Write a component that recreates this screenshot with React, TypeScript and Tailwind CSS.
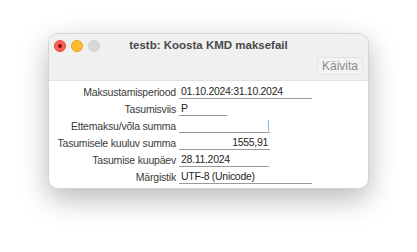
import React from 'react';

type Row = { label: string; value: string; width: string; align?: 'right'; caret?: boolean };

const rows: Row[] = [
  { label: 'Maksustamisperiood', value: '01.10.2024:31.10.2024', width: 'w-[133px]' },
  { label: 'Tasumisviis', value: 'P', width: 'w-[48px]' },
  { label: 'Ettemaksu/võla summa', value: '', width: 'w-[91px]', caret: true },
  { label: 'Tasumisele kuuluv summa', value: '1555,91', width: 'w-[91px]', align: 'right' },
  { label: 'Tasumise kuupäev', value: '28.11.2024', width: 'w-[90px]' },
  { label: 'Märgistik', value: 'UTF-8 (Unicode)', width: 'w-[133px]' },
];

const Field: React.FC<{ row: Row }> = ({ row }) => (
  <div className="flex items-end h-[17px]">
    <div className="w-[130px] shrink-0 whitespace-nowrap text-right pr-[3px] text-[10.5px] leading-[14px] tracking-[-0.2px] text-[#3a3a3a]">
      {row.label}
    </div>
    <div
      className={`relative ${row.width} h-[15px] border-b border-[#9a9a9a] text-[10.5px] leading-[14px] tracking-[-0.3px] text-[#262626] px-[2px] whitespace-nowrap ${
        row.align === 'right' ? 'text-right' : ''
      }`}
    >
      {row.value}
      {row.caret && <span className="absolute right-[1px] bottom-[1px] w-[1px] h-[11px] bg-[#8fb4ff]" />}
    </div>
  </div>
);

export default function App() {
  return (
    <div className="w-[417px] h-[252px] bg-white pt-[33px] pl-[48px]" style={{ fontFamily: '"Liberation Sans", Arial, sans-serif' }}>
      <div className="w-[321px] h-[156px] rounded-[10px] overflow-hidden bg-white border border-[#d4d4d4] shadow-[0_10px_28px_rgba(0,0,0,0.28)]">
        <div className="h-[47px] bg-[#f0f0f0] border-b border-[#e2e2e2] flex flex-col">
          <div className="relative h-[22px] flex items-center">
            <div className="flex gap-[5px] pl-[5px] pt-[1px]">
              <span className="flex items-center justify-center w-[12px] h-[12px] rounded-full bg-[#fe5f57] border border-[#e0443e]">
                <span className="w-[4px] h-[4px] rounded-full bg-[#7b0d07]" />
              </span>
              <span className="w-[12px] h-[12px] rounded-full bg-[#febc2e] border border-[#dea123]" />
              <span className="w-[12px] h-[12px] rounded-full bg-[#d8d8d8] border border-[#cccccc]" />
            </div>
            <div className="absolute inset-0 flex items-center justify-center pt-[1px] text-[11.5px] font-bold text-[#4a4a4a]">
              testb: Koosta KMD maksefail
            </div>
          </div>
          <div className="flex justify-end pr-[5px] pt-[1px]">
            <div className="h-[18px] px-[4px] rounded-[4px] border border-[#e3e3e3] bg-[#f3f3f3] text-[12px] leading-[16px] text-[#8a8a8a]">
              Käivita
            </div>
          </div>
        </div>
        <div className="flex flex-col pt-[1px]">
          {rows.map((r) => (
            <Field key={r.label} row={r} />
          ))}
        </div>
      </div>
    </div>
  );
}
